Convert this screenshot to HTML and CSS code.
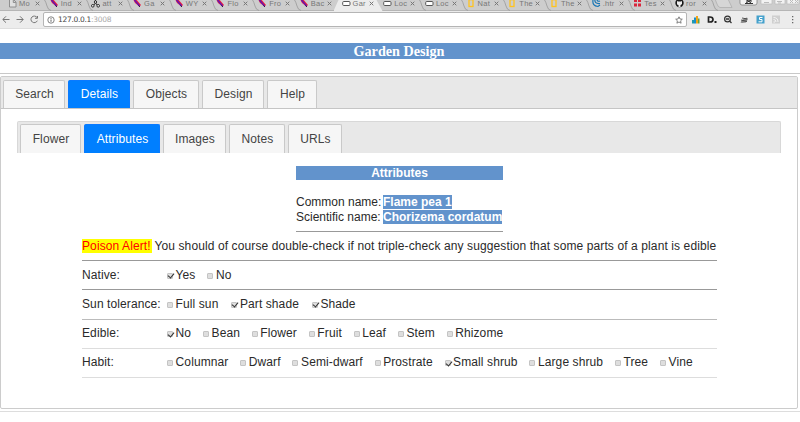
FILE: index.html
```html
<!DOCTYPE html>
<html lang="en">
<head>
<meta charset="utf-8">
<title>Garden Design</title>
<link rel="stylesheet" href="styles.css">
</head>
<body>
<svg class="defs" width="0" height="0">
  <symbol id="page" viewBox="0 0 9 9"><path d="M1.500-.5h4l2.500 2.500v5h-6.500zM5.300 0v2.500h2.500" fill="#e0e0e0" stroke="#888" stroke-width=".9"/></symbol>
  <symbol id="pen" viewBox="0 0 9 9"><path d="M0-1l2.500-.5 5.500 6.500-1.500 1.500L2 3z" fill="#f0183c"/><path d="M1.500 0l5 6" stroke="#6018b0" stroke-width="1.500"/><path d="M5.500 5.500l1.500 1.500" stroke="#35203d"/></symbol>
  <symbol id="tree" viewBox="0 0 9 9"><path d="M4.500 0v3L2 6M4.500 3L7 6M4.500 0L2-1" stroke="#222" fill="none"/><circle cx="4.500" cy="2" r="1.200" fill="#fff" stroke="#222"/><circle cx="1.800" cy="5.800" r="1.300" fill="#fff" stroke="#222"/><circle cx="7.200" cy="5.800" r="1.300" fill="#fff" stroke="#222"/></symbol>
  <symbol id="box" viewBox="0 0 9 9"><rect x=".7" y="1.500" width="7.300" height="4" rx="1" fill="#fff" stroke="#555"/></symbol>
  <symbol id="frame" viewBox="0 0 9 9"><rect x="2" y="-.3" width="4" height="6.800" fill="none" stroke="#ffc31f" stroke-width="1.300"/></symbol>
  <symbol id="swirl" viewBox="0 0 9 9"><path d="M1 0Q0 6 6 6.500L8 5M3-1Q2 4 8 3.500M5-1Q5 2 8 1" fill="none" stroke="#1675b5" stroke-width="1.200"/></symbol>
  <symbol id="dots" viewBox="0 0 9 9"><path d="M1-1h3v3H1zM5-1h3v3H5zM1 3.500h3v3H1zM5 3.500h3v3H5z" fill="#d9263c"/></symbol>
  <symbol id="cat" viewBox="0 0 9 9"><circle cx="4.500" cy="3" r="4.200" fill="#181818"/><path d="M2 1l1 .5h3L7 1v3Q6 5 5.500 5v2h-2V5Q2 5 2 4z" fill="#eee"/></symbol>
  <symbol id="edge" viewBox="0 0 9 11"><path d="M1-1Q3 2 4 6T8 10.500" fill="none" stroke="#999" stroke-width=".8"/></symbol>
  <symbol id="close" viewBox="0 0 5 5"><path d="M.7.700l3.600 3.600M4.300.700L.700 4.300" stroke="#777" stroke-width="1"/></symbol>
</svg>
<div class="browser">
  <div class="strip">
    <div class="btab"><svg class="fav"><use href="#page"/></svg><span>Mo</span><svg class="x"><use href="#close"/></svg><svg class="edge"><use href="#edge"/></svg></div>
    <div class="btab"><svg class="fav"><use href="#pen"/></svg><span>Ind</span><svg class="x"><use href="#close"/></svg><svg class="edge"><use href="#edge"/></svg></div>
    <div class="btab"><svg class="fav"><use href="#tree"/></svg><span>att</span><svg class="x"><use href="#close"/></svg><svg class="edge"><use href="#edge"/></svg></div>
    <div class="btab"><svg class="fav"><use href="#pen"/></svg><span>Ga</span><svg class="x"><use href="#close"/></svg><svg class="edge"><use href="#edge"/></svg></div>
    <div class="btab"><svg class="fav"><use href="#pen"/></svg><span>WY</span><svg class="x"><use href="#close"/></svg><svg class="edge"><use href="#edge"/></svg></div>
    <div class="btab"><svg class="fav"><use href="#pen"/></svg><span>Flo</span><svg class="x"><use href="#close"/></svg><svg class="edge"><use href="#edge"/></svg></div>
    <div class="btab"><svg class="fav"><use href="#pen"/></svg><span>Fro</span><svg class="x"><use href="#close"/></svg><svg class="edge"><use href="#edge"/></svg></div>
    <div class="btab"><svg class="fav"><use href="#pen"/></svg><span>Bac</span><svg class="x"><use href="#close"/></svg></div>
    <div class="btab current"><svg class="fav"><use href="#box"/></svg><span>Gar</span><svg class="x"><use href="#close"/></svg></div>
    <div class="btab"><svg class="fav"><use href="#box"/></svg><span>Loc</span><svg class="x"><use href="#close"/></svg><svg class="edge"><use href="#edge"/></svg></div>
    <div class="btab"><svg class="fav"><use href="#box"/></svg><span>Loc</span><svg class="x"><use href="#close"/></svg><svg class="edge"><use href="#edge"/></svg></div>
    <div class="btab"><svg class="fav"><use href="#frame"/></svg><span>Nat</span><svg class="x"><use href="#close"/></svg><svg class="edge"><use href="#edge"/></svg></div>
    <div class="btab"><svg class="fav"><use href="#frame"/></svg><span>The</span><svg class="x"><use href="#close"/></svg><svg class="edge"><use href="#edge"/></svg></div>
    <div class="btab"><svg class="fav"><use href="#frame"/></svg><span>The</span><svg class="x"><use href="#close"/></svg><svg class="edge"><use href="#edge"/></svg></div>
    <div class="btab"><svg class="fav"><use href="#swirl"/></svg><span>.htr</span><svg class="x"><use href="#close"/></svg><svg class="edge"><use href="#edge"/></svg></div>
    <div class="btab"><svg class="fav"><use href="#dots"/></svg><span>Tes</span><svg class="x"><use href="#close"/></svg><svg class="edge"><use href="#edge"/></svg></div>
    <div class="btab"><svg class="fav"><use href="#cat"/></svg><span>ror</span><svg class="x"><use href="#close"/></svg><svg class="edge"><use href="#edge"/></svg></div>
    <svg class="newtab" viewBox="0 0 20 11"><path d="M1-1h13l4 8.500H6Q4 7 3 4z" fill="#d6d6d6" stroke="#aaa" stroke-width=".7"/></svg>
    <svg class="winbtns" viewBox="0 0 62 8"><g fill="#f2f2f2" stroke="#bbb" stroke-width=".7"><path d="M1-1v4q0 2 2 2h13q2 0 2-2v-4z" stroke="#777"/><path d="M22-1v5h11v-5zM36-1v5h10v-5zM48-1v5h12v-5z"/></g><path d="M6 3.500h8M7 1h6M7 3l5-3M8 0l4 3" stroke="#333"/><path d="M25 2.500h5M38 1.500h5M39 3h3M51 0l3 3M54 0l-3 3M56 0l3 3M59 0l-3 3" stroke="#bbb"/></svg>
  </div>
  <div class="toolbar">
    <svg class="nav" viewBox="0 0 43 16"><g fill="none" stroke="#777" stroke-width="1"><path d="M9.500 7.500H3M6 4.300L2.800 7.500 6 10.700M16.500 7.500H23M20 4.300l3.200 3.200-3.200 3.200M37 5.500a3.300 3.300 0 1 0 .3 3.200M37.500 4v2.300H35"/></g></svg>
    <div class="address">
      <svg class="info" viewBox="0 0 8 8"><circle cx="4" cy="4" r="3.200" fill="none" stroke="#666" stroke-width=".8"/><path d="M4 3.500v2.300M4 2v.9" stroke="#666"/></svg>
      <span class="url">127.0.0.1<span>:3008</span></span>
      <svg class="star" viewBox="0 0 8 8"><path d="M4 .8l1 2.200 2.300.2-1.700 1.600.5 2.400L4 6 1.900 7.200l.5-2.400L.7 3.200 3 3z" fill="none" stroke="#666" stroke-width=".8"/></svg>
    </div>
    <svg class="exts" viewBox="0 0 113 16">
      <path d="M5 8h2v3.500H5z" fill="#239aa8"/><path d="M7 5.500h2v6H7z" fill="#178fd0"/><path d="M9 4h2v7.500H9z" fill="#f1a51a"/><path d="M11 6.500h1.500v5H11z" fill="#5aa348"/>
      <path d="M21.500 5h1.500q3 0 3 2.500t-3 2.500h-1.500z" fill="none" stroke="#222" stroke-width="1.700"/><path d="M27.500 9h2v2h-2z" fill="#222"/>
      <circle cx="40.500" cy="7" r="2.900" fill="#ddd" stroke="#333" stroke-width="1.200"/><path d="M39 7h3M42.500 9l2 2" stroke="#333" stroke-width="1.300"/>
      <path d="M53.500 10.500q1-3 4-4l2.500-1 1 1.500-2 3.500-4 .5z" fill="#888"/><path d="M54 8l6 1.500M55 6l5 1" stroke="#333" stroke-width=".8"/>
      <path d="M69.500 3.500h8v8h-8z" fill="#45a1cc"/><path d="M75.500 5.500h-3v2H75v2.300h-3.500" fill="none" stroke="#fff"/>
      <path d="M85 3.500h8v8h-8z" fill="#cfcfcf"/><path d="M86.500 10H88M86.500 7.500q2.500 0 2.500 2.500M86.500 5.500q4.500 0 4.500 4.500" fill="none" stroke="#f5f5f5"/>
      <path d="M105 4h1.300v1.300H105zM105 7h1.300v1.300H105zM105 10h1.300v1.300H105z" fill="#666"/>
    </svg>
  </div>
</div>
<h1>Garden Design</h1>
<div class="outer">
  <div class="panel">
    <ul class="tabs main">
      <li class="t1">Search</li><li class="t2 active">Details</li><li class="t3">Objects</li><li class="t4">Design</li><li class="t5">Help</li>
    </ul>
    <ul class="tabs sub">
      <li class="s1">Flower</li><li class="s2 active">Attributes</li><li class="s3">Images</li><li class="s4">Notes</li><li class="s5">URLs</li>
    </ul>
    <div class="plant">
      <h2>Attributes</h2>
      <div class="name"><span class="key">Common name:</span><b class="common">Flame pea 1</b></div>
      <div class="name"><span class="key">Scientific name:</span><b>Chorizema cordatum</b></div>
    </div>
    <div class="details">
      <div class="row note"><mark>Poison Alert!</mark><span class="advice">You should of course double-check if not triple-check any suggestion that some parts of a plant is edible</span></div>
      <div class="row"><span class="label">Native:</span><label class="on"><i></i>Yes</label><label><i></i>No</label></div>
      <div class="row light sun"><span class="label">Sun tolerance:</span><label><i></i>Full sun</label><label class="on"><i></i>Part shade</label><label class="on"><i></i>Shade</label></div>
      <div class="row faint"><span class="label">Edible:</span><label class="on"><i></i>No</label><label><i></i>Bean</label><label><i></i>Flower</label><label><i></i>Fruit</label><label><i></i>Leaf</label><label><i></i>Stem</label><label><i></i>Rhizome</label></div>
      <div class="row faint"><span class="label">Habit:</span><label><i></i>Columnar</label><label><i></i>Dwarf</label><label><i></i>Semi-dwarf</label><label><i></i>Prostrate</label><label class="on"><i></i>Small shrub</label><label><i></i>Large shrub</label><label><i></i>Tree</label><label><i></i>Vine</label></div>
    </div>
  </div>
</div>
</body>
</html>
```
FILE: styles.css
```css
* { box-sizing: border-box; }
body {
  margin: 0;
  width: 800px;
  height: 422px;
  overflow: hidden;
  background: #fff;
  color: #2a2a2a;
  font: 12px/15px "Liberation Sans", Arial, sans-serif;
}
.defs { display: block; }
.browser { height: 29px; background: #ececec; border-bottom: 1px solid #dedede; }
.strip { display: flex; height: 11px; background: #cdcdcd; border-bottom: 1px solid #b5b5b5; }
.btab { display: flex; flex: none; position: relative; width: 41.7px; height: 11px; padding-left: 8px; }
.btab span { width: 15px; margin: 0 0 0 2px; font: 7.5px/8px "Liberation Sans", sans-serif; letter-spacing: .3px; color: #777; white-space: nowrap; }
.btab .fav { width: 9px; height: 9px; flex: none; }
.btab .x { width: 5px; height: 5px; margin: 1px 0 0 1px; flex: none; }
.btab .edge { position: absolute; left: 43px; top: 0; width: 9px; height: 11px; }
.current::before { content: ""; position: absolute; left: 0; top: 0; width: 49px; height: 11px; background: #ececec; clip-path: polygon(5px 0, 43px 0, 49px 100%, 0 100%); }
.current > * { position: relative; }
.newtab { width: 20px; height: 11px; flex: none; margin-left: 5px; }
.winbtns { width: 62px; height: 8px; flex: none; margin-left: 5px; }
.toolbar { display: flex; height: 17px; padding-top: 1px; }
.nav { width: 43px; height: 16px; flex: none; }
.address { display: flex; align-items: center; width: 644px; height: 15px; padding: 0 3px; background: #fff; border: 1px solid #b5b5b5; border-radius: 2px; }
.info { width: 8px; height: 8px; }
.url { margin-left: 3px; font: 7.5px/12px "DejaVu Sans", sans-serif; letter-spacing: -.3px; color: #444; }
.url span { color: #aaa; }
.star { width: 8px; height: 8px; margin-left: auto; }
.exts { width: 113px; height: 16px; }
h1 { margin: 14px 0; height: 16px; background: #6293cc; color: #fff; font: bold 14.2px/17px "Liberation Serif", serif; text-align: center; padding-right: 2px; }
.outer { height: 339px; border-top: 1px solid #c8c8c8; border-bottom: 1px solid #ddd; padding-top: 2px; }
.panel { width: 798px; height: 333px; border: 1px solid #ccc; border-radius: 2px; }
.tabs { display: flex; gap: 3px; list-style: none; margin: 0; padding: 3px 2px 0; background: #e8e8e8; }
.tabs li { border: 1px solid #c9c9c9; border-bottom: 0; border-radius: 2px 2px 0 0; background: #f6f6f6; color: #444; height: 29px; line-height: 27px; text-align: center; white-space: nowrap; font-size: 12px; letter-spacing: .1px; padding-left: 1px; }
.tabs .active { background: #007fff; border-color: #0a7aff; color: #fff; }
.main { height: 32px; border-bottom: 1px solid #c5c5c5; }
.main li { height: 28px; }
.sub { width: 764px; height: 32px; margin: 12px 0 0 16px; border: 1px solid #d8d8d8; border-bottom: 0; border-radius: 2px 2px 0 0; }
.tabs.sub { padding-top: 2px; }
.sub li { line-height: 29px; }
.t1, .t2, .t4 { width: 62px; }
.t3 { width: 66px; }
.t5 { width: 50px; }
.s1 { width: 61px; }
.s2 { width: 76px; }
.s3 { width: 63px; }
.s4 { width: 56px; }
.s5 { width: 54px; }
.plant { width: 207px; height: 66px; margin: 13px 0 0 295px; border-bottom: 1px solid #999; }
h2 { margin: 0 0 14.500px; height: 14px; background: #6293cc; color: #fff; font-size: 12px; line-height: 14px; text-align: center; }
.name { display: flex; height: 15px; line-height: 14px; white-space: nowrap; }
.key { width: 87px; }
.name b { height: 14px; background: #6293cc; color: #fff; }
.details { width: 635px; margin-left: 81px; letter-spacing: .1px; }
.row { display: flex; align-items: center; height: 29.200px; border-bottom: 1px solid #999; white-space: nowrap; }
.light { border-color: #bbb; }
.faint { border-color: #ddd; }
.label { width: 85px; }
mark { height: 14px; line-height: 14px; background: #ff0; color: #f00; width: 69.500px; margin-right: 3px; }
.advice { letter-spacing: .107px; }
label { display: flex; align-items: center; margin-right: 11.800px; }
.sun label { margin-right: 12.900px; }
i { position: relative; width: 6px; height: 6px; margin: 1px 2.600px 0 0; border: 1px solid #c4c4c4; border-radius: 1px; background: #dedede; }
.on i::after { content: ""; position: absolute; left: 1px; top: -1.500px; width: 3px; height: 5px; border: solid #333; border-width: 0 1.100px 1.100px 0; transform: rotate(40deg); }
```
